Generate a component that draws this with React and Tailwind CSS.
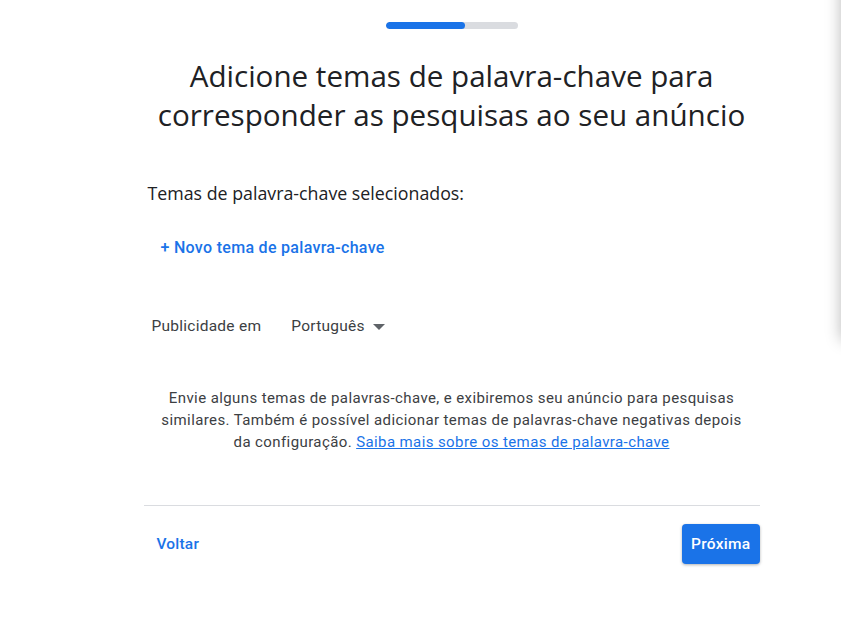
import React from 'react'

export default function App() {
	return (
		<div className="relative w-full h-[618px] overflow-hidden bg-white font-['Roboto',sans-serif]">
			<div className="pl-[62px]">
				<div className="mx-auto w-[616px] flex flex-col">
					{/* step progress */}
					<div className="flex justify-center pt-[22px]">
						<div className="w-[132px] h-[7px] rounded-full bg-[#dadce0] overflow-hidden">
							<div className="w-[79px] h-full rounded-full bg-[#1a73e8]" />
						</div>
					</div>

					<h1 className="mt-[27px] text-center text-[29.6px] leading-[39px] text-[#202124] font-['Open_Sans',sans-serif]">
						Adicione temas de palavra-chave para<br />
						corresponder as pesquisas ao seu anúncio
					</h1>

					<h2 className="mt-[46px] pl-[4px] text-[17.8px] leading-[26px] text-[#202124] font-['Open_Sans',sans-serif]">
						Temas de palavra-chave selecionados:
					</h2>

					<button className="mt-[30px] ml-[17px] self-start text-[16px] tracking-[0.3px] font-medium text-[#1a73e8]">
						+ Novo tema de palavra-chave
					</button>

					<div className="mt-[55px] pl-[8px] flex items-center text-[15.5px] tracking-[0.25px] text-[#3c4043]">
						<span>Publicidade em</span>
						<span className="ml-[30px]">Português</span>
						<svg className="ml-[8px]" width="12" height="6" viewBox="0 0 12 6">
							<path d="M0 0h12L6 6z" fill="#5f6368" />
						</svg>
					</div>

					<p className="mt-[49px] px-[14px] text-center text-[15px] leading-[22px] text-[#3c4043] tracking-[0.4px]">
						Envie alguns temas de palavras-chave, e exibiremos seu anúncio para pesquisas similares. Também é possível adicionar temas de palavras-chave negativas depois da configuração.{' '}
						<a className="text-[#1a73e8] underline">Saiba mais sobre os temas de palavra-chave</a>
					</p>

					<div className="mt-[52px] border-t border-[#dadce0]" />

					<div className="mt-[18px] flex items-center justify-between">
						<button className="ml-[13px] text-[15.5px] tracking-[0.2px] font-medium text-[#1a73e8]">Voltar</button>
						<button className="h-[40px] px-[9px] rounded-[4px] bg-[#1a73e8] text-white text-[15.5px] tracking-[0.3px] font-medium shadow-[0_1px_3px_rgba(60,64,67,0.4)]">
							Próxima
						</button>
					</div>
				</div>
			</div>

			{/* edge of the side panel, just off screen */}
			<div className="absolute left-full top-[-20px] w-[40px] h-[360px] bg-white shadow-[0_0_16px_rgba(0,0,0,0.28)]" />
		</div>
	)
}
